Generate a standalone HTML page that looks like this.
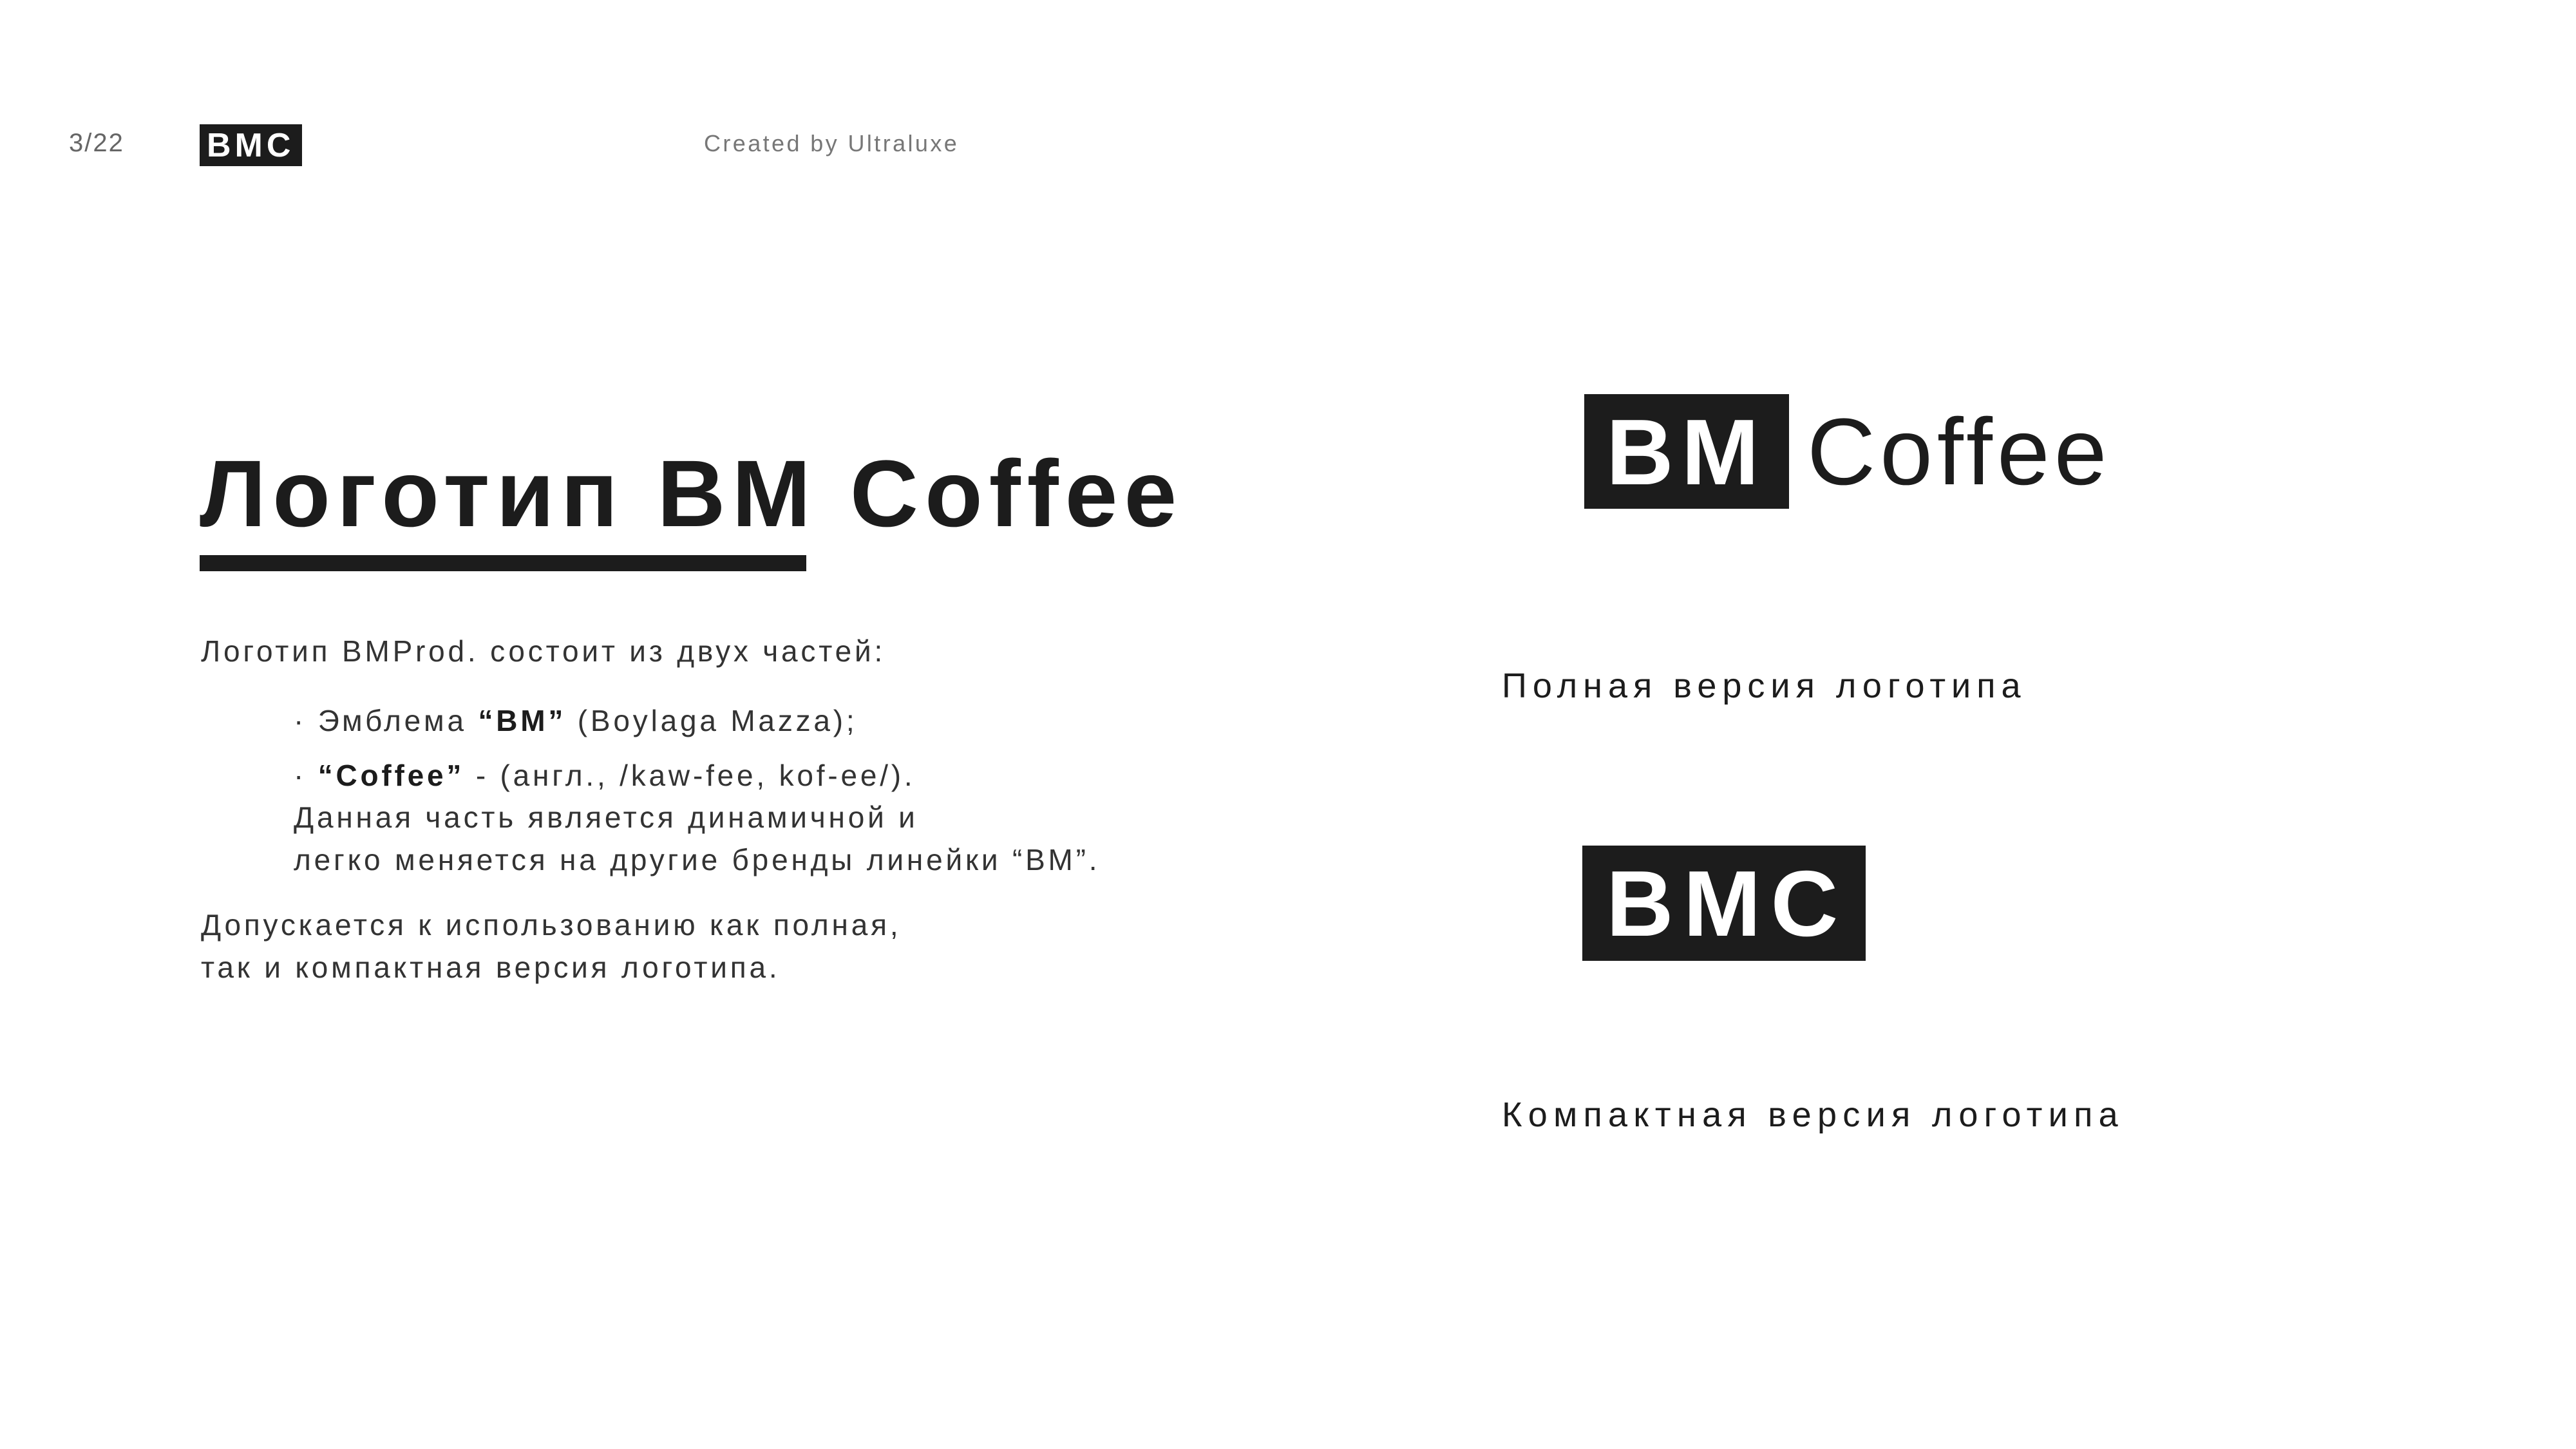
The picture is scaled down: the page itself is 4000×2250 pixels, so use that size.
<!DOCTYPE html>
<html><head><meta charset="utf-8"><style>
body{margin:0;width:4000px;height:2250px;background:#fff;position:relative;overflow:hidden;font-family:"Liberation Sans","Noto Sans CJK SC",sans-serif;color:#1c1c1c}
.a{position:absolute;white-space:nowrap;line-height:1}
.box{position:absolute;background:#1c1c1c}
.b{font-size:46px;letter-spacing:4.8px;color:#333}
</style></head><body>
<div class="a" style="left:107px;top:202px;font-size:40px;color:#666;letter-spacing:2px">3/22</div>
<div class="box" style="left:310px;top:193px;width:159px;height:65px"></div>
<div class="a" style="left:321px;top:200px;font-size:52px;font-weight:bold;color:#fff;letter-spacing:6px">BMC</div>
<div class="a" style="left:1093px;top:205px;font-size:36px;color:#777;letter-spacing:3.4px">Created by Ultraluxe</div>

<div class="a" style="left:310px;top:694px;font-size:147px;font-weight:bold;letter-spacing:10px">Логотип BM Coffee</div>
<div class="box" style="left:310px;top:862px;width:942px;height:25px"></div>

<div class="a b" style="left:312px;top:988px">Логотип BMProd. состоит из двух частей:</div>
<div class="a b" style="left:456px;top:1096px">· Эмблема <b style="color:#1c1c1c">“BM”</b> (Boylaga Mazza);</div>
<div class="a b" style="left:456px;top:1181px">· <b style="color:#1c1c1c">“Coffee”</b> - (англ., /kaw-fee, kof-ee/).</div>
<div class="a b" style="left:456px;top:1246px">Данная часть является динамичной и</div>
<div class="a b" style="left:456px;top:1312px">легко меняется на другие бренды линейки “BM”.</div>
<div class="a b" style="left:312px;top:1413px">Допускается к использованию как полная,</div>
<div class="a b" style="left:312px;top:1479px">так и компактная версия логотипа.</div>

<div class="box" style="left:2460px;top:612px;width:318px;height:178px"></div>
<div class="a" style="left:2494px;top:630px;font-size:145px;font-weight:bold;color:#fff;letter-spacing:12px">BM</div>
<div class="a" style="left:2806px;top:629px;font-size:147px;letter-spacing:7px">Coffee</div>
<div class="a" style="left:2332px;top:1038px;font-size:54px;letter-spacing:9px">Полная версия логотипа</div>

<div class="box" style="left:2457px;top:1313px;width:440px;height:179px"></div>
<div class="a" style="left:2494px;top:1331px;font-size:145px;font-weight:bold;color:#fff;letter-spacing:15px">BMC</div>
<div class="a" style="left:2332px;top:1704px;font-size:54px;letter-spacing:9.3px">Компактная версия логотипа</div>
</body></html>
